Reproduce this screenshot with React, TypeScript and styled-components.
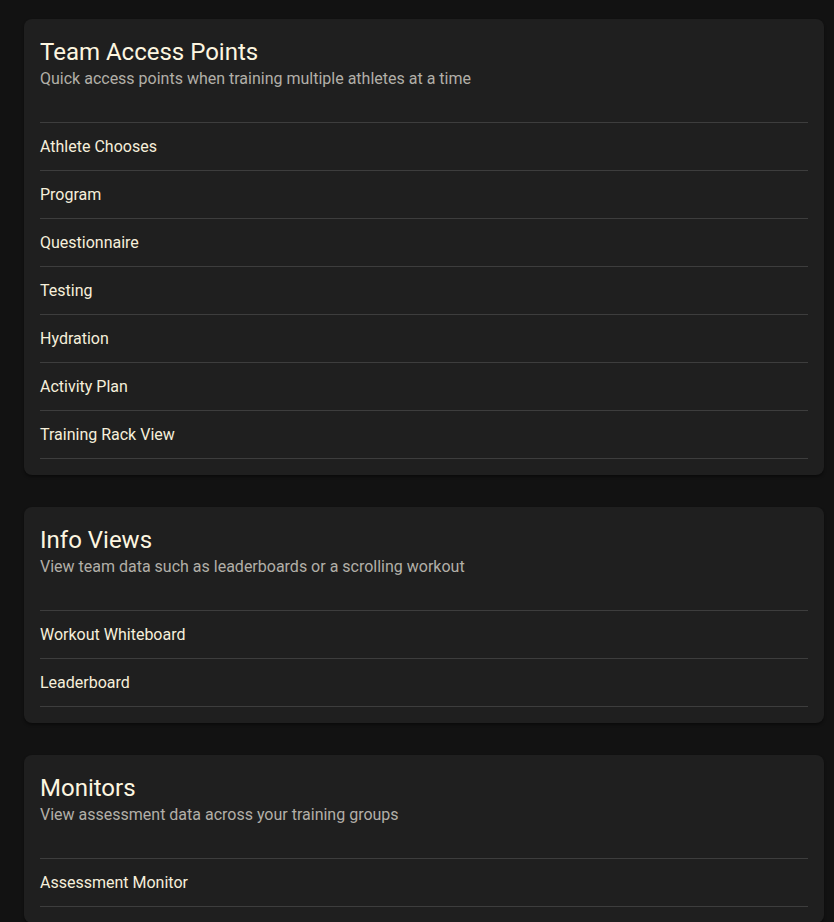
import React from "react";
import styled, { createGlobalStyle } from "styled-components";

const GlobalStyle = createGlobalStyle`
  html, body {
    margin: 0;
    padding: 0;
    background-color: #121212;
    font-family: Roboto, "Liberation Sans", Arial, sans-serif;
  }
`;

const Page = styled.div`
  display: flex;
  flex-direction: column;
  gap: 32px;
  padding: 19px 10px 19px 24px;
`;

const Card = styled.section`
  background-color: #1f1f1f;
  border-radius: 8px;
  box-shadow: 0 2px 3px rgb(0 0 0 / 40%);
  padding: 16px 16px 16px;
`;

const Title = styled.h2`
  margin: 1px 0 0;
  font-size: 24px;
  line-height: 32px;
  font-weight: 400;
  color: #fdf6e0;
`;

const Subtitle = styled.p`
  margin: 1px 0 33px;
  font-size: 16px;
  line-height: 20px;
  font-weight: 400;
  color: #b2afa8;
`;

const List = styled.ul`
  list-style: none;
  margin: 0;
  padding: 0;
  border-top: 1px solid #3d3d3d;
`;

const Row = styled.li`
  height: 47px;
  display: flex;
  align-items: center;
  border-bottom: 1px solid #3d3d3d;
  font-size: 16px;
  color: #f6efdb;
  cursor: pointer;
  &:hover {
    background-color: #262626;
  }
`;

type Section = { title: string; subtitle: string; items: string[] };

const sections: Section[] = [
  {
    title: "Team Access Points",
    subtitle: "Quick access points when training multiple athletes at a time",
    items: [
      "Athlete Chooses",
      "Program",
      "Questionnaire",
      "Testing",
      "Hydration",
      "Activity Plan",
      "Training Rack View",
    ],
  },
  {
    title: "Info Views",
    subtitle: "View team data such as leaderboards or a scrolling workout",
    items: ["Workout Whiteboard", "Leaderboard"],
  },
  {
    title: "Monitors",
    subtitle: "View assessment data across your training groups",
    items: ["Assessment Monitor"],
  },
];

const App: React.FC = () => {
  return (
    <>
      <GlobalStyle />
      <Page>
        {sections.map((s) => (
          <Card key={s.title}>
            <Title>{s.title}</Title>
            <Subtitle>{s.subtitle}</Subtitle>
            <List>
              {s.items.map((item) => (
                <Row key={item}>{item}</Row>
              ))}
            </List>
          </Card>
        ))}
      </Page>
    </>
  );
};

export default App;
